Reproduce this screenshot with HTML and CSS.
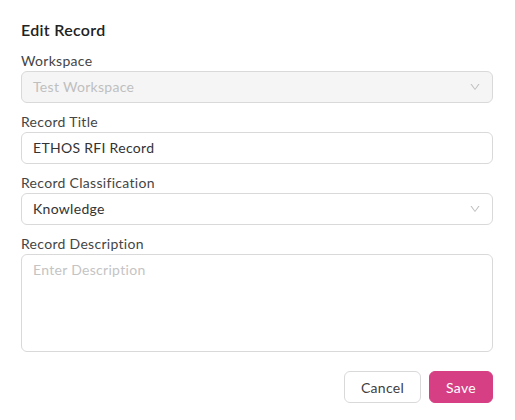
FILE: index.html
```html
<!DOCTYPE html>
<html lang="en">
<head>
<meta charset="utf-8">
<title>Edit Record</title>
<link rel="stylesheet" href="styles.css">
</head>
<body>
<form class="modal">
  <h2 class="modal-title">Edit Record</h2>

  <div class="field">
    <label class="field-label">Workspace</label>
    <div class="select select-disabled">
      <span class="select-value">Test Workspace</span>
      <svg class="select-arrow" viewBox="0 0 1024 1024" aria-hidden="true"><path d="M884 256h-75c-5.1 0-9.9 2.5-12.9 6.7L512 654.2 227.9 262.7c-3-4.2-7.8-6.7-12.9-6.7h-75c-6.5 0-10.3 7.4-6.5 12.7l352.6 486.1c12.8 17.6 39 17.6 51.7 0l352.6-486.1c3.9-5.3.1-12.7-6.4-12.7z"/></svg>
    </div>
  </div>

  <div class="field">
    <label class="field-label">Record Title</label>
    <div class="input">ETHOS RFI Record</div>
  </div>

  <div class="field">
    <label class="field-label">Record Classification</label>
    <div class="select">
      <span class="select-value">Knowledge</span>
      <svg class="select-arrow" viewBox="0 0 1024 1024" aria-hidden="true"><path d="M884 256h-75c-5.1 0-9.9 2.5-12.9 6.7L512 654.2 227.9 262.7c-3-4.2-7.8-6.7-12.9-6.7h-75c-6.5 0-10.3 7.4-6.5 12.7l352.6 486.1c12.8 17.6 39 17.6 51.7 0l352.6-486.1c3.9-5.3.1-12.7-6.4-12.7z"/></svg>
    </div>
  </div>

  <div class="field">
    <label class="field-label">Record Description</label>
    <div class="textarea"><span class="placeholder">Enter Description</span></div>
  </div>

  <div class="actions">
    <button type="button" class="btn btn-default">Cancel</button>
    <button type="button" class="btn btn-primary">Save</button>
  </div>
</form>
</body>
</html>
```

FILE: styles.css
```css
* { box-sizing: border-box; }

html, body {
  margin: 0;
  padding: 0;
  background: #ffffff;
}

body {
  font-family: "Lato", "Noto Sans", sans-serif;
  font-size: 14px;
  letter-spacing: 0.3px;
  color: #333333;
}

.modal {
  width: 515px;
  padding: 18px 22px 0 21px;
  display: flex;
  flex-direction: column;
}

.modal-title {
  margin: 0;
  font-size: 16px;
  line-height: 24px;
  font-weight: 600;
  color: #222222;
}

.field {
  display: flex;
  flex-direction: column;
  margin-top: 9px;
}

.field-label {
  font-size: 14px;
  line-height: 20px;
  color: #454545;
}

.select,
.input {
  height: 32px;
  border: 1px solid #d9d9d9;
  border-radius: 6px;
  padding: 0 11px;
  display: flex;
  align-items: center;
  line-height: 22px;
  color: #333333;
  background: #ffffff;
}

.select { justify-content: space-between; }

.select-disabled {
  background: #f5f5f5;
  color: #bfbfbf;
}

.select-arrow {
  width: 12px;
  height: 12px;
  fill: #bfbfbf;
  flex: none;
}

.textarea {
  height: 98px;
  border: 1px solid #d9d9d9;
  border-radius: 6px;
  padding: 4px 11px;
  line-height: 22px;
}

.placeholder { color: #c4c4c4; }

.actions {
  display: flex;
  justify-content: flex-end;
  gap: 8px;
  margin-top: 19px;
}

.btn {
  height: 32px;
  padding: 0 16px;
  border-radius: 6px;
  font-family: inherit;
  font-size: 14px;
  letter-spacing: inherit;
  cursor: pointer;
}

.btn-default {
  background: #ffffff;
  border: 1px solid #d9d9d9;
  color: #404040;
}

.btn-primary {
  background: #d63f84;
  border: 1px solid #d63f84;
  color: #ffffff;
}
```
